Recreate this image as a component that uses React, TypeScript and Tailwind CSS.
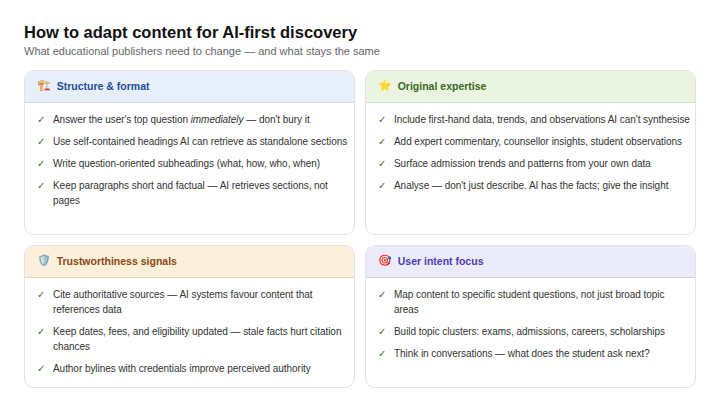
const cards = [
  { icon: "🏗️", title: "Structure & format", head: "bg-[#e7f0fa] border-[#c9dbef] text-[#1f4e96]", items: [<>Answer the user's top question <i>immediately</i> — don't bury it</>, "Use self-contained headings AI can retrieve as standalone sections", "Write question-oriented subheadings (what, how, who, when)", "Keep paragraphs short and factual — AI retrieves sections, not pages"] },
  { icon: "⭐", title: "Original expertise", head: "bg-[#eaf4e0] border-[#cfe3bd] text-[#3b6a1c]", items: ["Include first-hand data, trends, and observations AI can't synthesise", "Add expert commentary, counsellor insights, student observations", "Surface admission trends and patterns from your own data", "Analyse — don't just describe. AI has the facts; give the insight"] },
  { icon: "🛡️", title: "Trustworthiness signals", head: "bg-[#fcefdc] border-[#efd6b2] text-[#8a4a12]", items: ["Cite authoritative sources — AI systems favour content that references data", "Keep dates, fees, and eligibility updated — stale facts hurt citation chances", "Author bylines with credentials improve perceived authority"] },
  { icon: "🎯", title: "User intent focus", head: "bg-[#ecebfa] border-[#cfcdf0] text-[#4b3db0]", items: ["Map content to specific student questions, not just broad topic areas", "Build topic clusters: exams, admissions, careers, scholarships", "Think in conversations — what does the student ask next?"] },
];

export default function App() {
  return (
    <div className="w-[720px] h-[411px] bg-white px-6 pt-[22px] text-[#222]" style={{ fontFamily: '"Liberation Sans", Arial, sans-serif' }}>
      <h1 className="text-[16.5px] font-bold leading-5 text-[#111]">How to adapt content for AI-first discovery</h1>
      <p className="text-[11px] text-[#666] mt-[1px] leading-4">What educational publishers need to change — and what stays the same</p>
      <div className="grid grid-cols-2 gap-x-[10px] gap-y-[10px] mt-[11px]">
        {cards.map((c, i) => (
          <div key={i} className={`rounded-[10px] border border-[#e3e3e3] overflow-hidden bg-white ${i < 2 ? "h-[165px]" : "h-[143px]"}`}>
            <div className={`h-[32px] flex items-center gap-[6px] px-3 border-b text-[10.5px] font-bold ${c.head}`}>
              <span className="text-[11px]" style={{ fontFamily: '"Noto Color Emoji", sans-serif' }}>{c.icon}</span>
              <span>{c.title}</span>
            </div>
            <ul className="pl-3 pr-1 pt-[9px] flex flex-col gap-[7px]">
              {c.items.map((t, j) => (
                <li key={j} className="flex text-[10px] leading-[15px] text-[#333]">
                  <span className="w-[16px] shrink-0 text-[#4a6a3a]">✓</span>
                  <span className="tracking-[-0.05px]">{t}</span>
                </li>
              ))}
            </ul>
          </div>
        ))}
      </div>
    </div>
  );
}
